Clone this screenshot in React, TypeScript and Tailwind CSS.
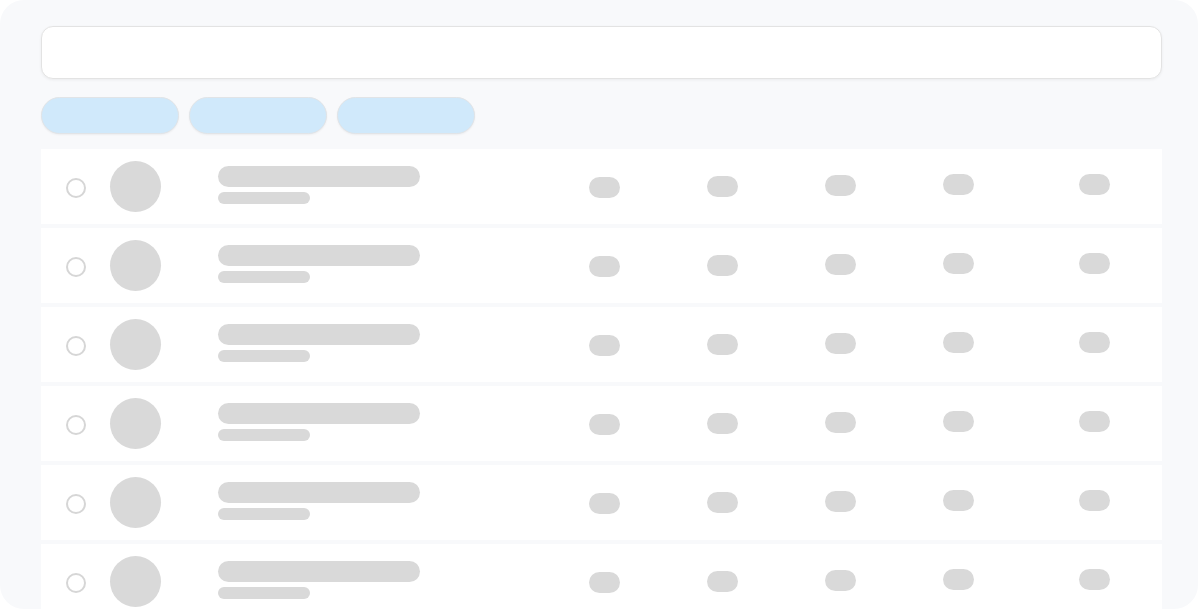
import React from 'react';

const rows = [0, 1, 2, 3, 4, 5];

const Pill: React.FC<{ className?: string }> = ({ className = '' }) => (
  <div className={`w-[31px] h-[21px] rounded-full bg-[#d9d9d9] shrink-0 ${className}`} />
);

const SkeletonRow: React.FC = () => (
  <div className="flex items-center h-[75px] shrink-0 bg-white pl-[25px]">
    <div className="w-[20px] h-[20px] rounded-full border-2 border-[#d6d6d6] bg-white shrink-0 mt-[3px]" />
    <div className="w-[51px] h-[51px] rounded-full bg-[#d9d9d9] ml-[24px] shrink-0" />
    <div className="flex flex-col gap-[5px] ml-[57px] mb-[3px] w-[202px] shrink-0">
      <div className="h-[21px] w-[202px] rounded-full bg-[#d9d9d9]" />
      <div className="h-[12px] w-[92px] rounded-full bg-[#d9d9d9]" />
    </div>
    <Pill className="ml-[169px] mt-[2px]" />
    <Pill className="ml-[87px]" />
    <Pill className="ml-[87px] mb-[2px]" />
    <Pill className="ml-[87px] mb-[4px]" />
    <Pill className="ml-[105px] mb-[4px]" />
  </div>
);

const App: React.FC = () => {
  return (
    <div className="w-[1198px] h-[609px] bg-white">
      <div className="h-[609px] w-full rounded-[24px] bg-[#f8f9fb] overflow-hidden pt-[26px] pl-[41px] pr-[36px]">
        {/* search */}
        <div className="h-[53px] w-full rounded-[12px] bg-white border border-[#e3e3e3] shadow-[0_1px_3px_rgba(0,0,0,0.06)]" />

        {/* filter chips */}
        <div className="flex gap-[10px] mt-[18px]">
          <div className="w-[138px] h-[37px] rounded-full bg-[#d0e9fb] border border-[#e1e4e7] shadow-[0_1px_2px_rgba(0,0,0,0.05)]" />
          <div className="w-[138px] h-[37px] rounded-full bg-[#d0e9fb] border border-[#e1e4e7] shadow-[0_1px_2px_rgba(0,0,0,0.05)]" />
          <div className="w-[138px] h-[37px] rounded-full bg-[#d0e9fb] border border-[#e1e4e7] shadow-[0_1px_2px_rgba(0,0,0,0.05)]" />
        </div>

        {/* list */}
        <div className="flex flex-col gap-[4px] mt-[15px]">
          {rows.map((r) => (
            <SkeletonRow key={r} />
          ))}
        </div>
      </div>
    </div>
  );
};

export default App;
